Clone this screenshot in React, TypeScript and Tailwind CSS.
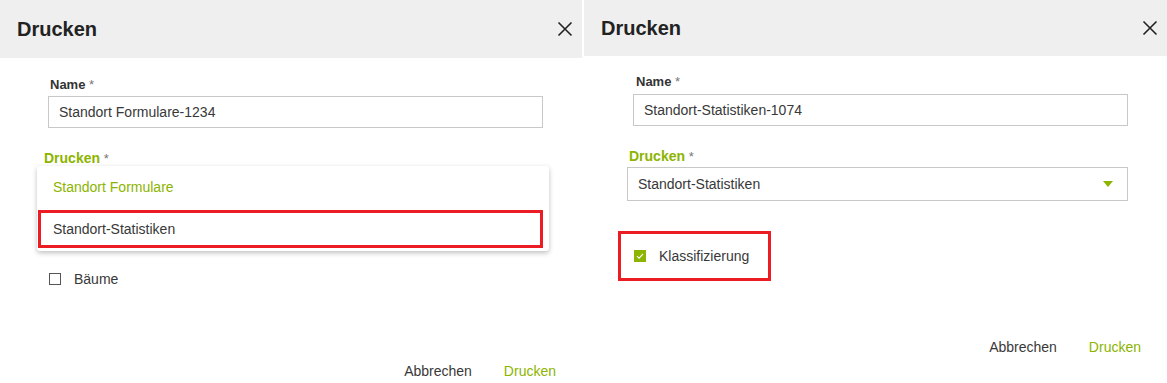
import React from 'react';

const green = 'text-[#8cb400]';

const CloseIcon: React.FC = () => (
  <svg width="16" height="16" viewBox="0 0 16 16" fill="none">
    <path d="M1.5 1.5L14.5 14.5M14.5 1.5L1.5 14.5" stroke="#222" strokeWidth="1.6" />
  </svg>
);

const Header: React.FC<{ h: string }> = ({ h }) => (
  <div className={`${h} bg-[#efefef] flex items-center justify-between pl-[17px] pr-[9px] shrink-0`}>
    <span className="text-[20px] font-bold text-[#222] leading-6">Drucken</span>
    <CloseIcon />
  </div>
);

const Label: React.FC<{ text: string; color?: string; size?: string; className?: string }> = ({
  text,
  color = 'text-[#333]',
  size = 'text-[13px]',
  className = '',
}) => (
  <div className={`h-[16px] leading-4 ${className}`}>
    <span className={`${size} font-bold ${color}`}>{text}</span>
    <span className="text-[13px] text-[#777]"> *</span>
  </div>
);

const TextInput: React.FC<{ value: string; className?: string }> = ({ value, className = '' }) => (
  <div
    className={`h-[32px] w-[495px] border border-[#c8c8c8] flex items-center pl-[10px] text-[14px] text-[#383838] ${className}`}
  >
    {value}
  </div>
);

const Footer: React.FC<{ pb: string }> = ({ pb }) => (
  <div className={`mt-auto flex justify-end gap-[32px] pr-[26px] ${pb} text-[14px] leading-4`}>
    <span className="text-[#383838]">Abbrechen</span>
    <span className={green}>Drucken</span>
  </div>
);

const App: React.FC = () => {
  return (
    <div
      className="w-[1167px] h-[383px] flex gap-[2px] bg-white overflow-hidden"
      style={{ fontFamily: '"Liberation Sans", Arial, sans-serif' }}
    >
      {/* left dialog: dropdown open */}
      <div className="w-[582px] h-full flex flex-col">
        <Header h="h-[58px]" />
        <div className="pl-[48px] flex flex-col">
          <Label text="Name" className="mt-[18px] ml-[2px]" />
          <TextInput value="Standort Formulare-1234" className="mt-[4px]" />
          <Label text="Drucken" color={green} size="text-[14px]" className="mt-[22px] ml-[-4px]" />
          <div className="relative h-[34px] w-[501px] ml-[-6px]">
            <div className="absolute top-0 left-[-5px] w-[512px] h-[85px] bg-white rounded-[3px] shadow-[0_2px_5px_rgba(0,0,0,0.25)] flex flex-col z-10">
              <div className={`h-[42px] flex items-center pl-[16px] text-[14px] ${green}`}>
                Standort Formulare
              </div>
              <div className="h-[43px] flex items-start pt-[2px]">
                <div className="ml-[1px] w-[505px] h-[38px] border-[3px] border-[#ec1c24] flex items-center pl-[12px] text-[14px] text-[#383838]">
                  Standort-Statistiken
                </div>
              </div>
            </div>
          </div>
          <div className="mt-[69px] ml-[1px] h-[20px] flex items-center gap-[13px]">
            <div className="w-[12px] h-[12px] border border-[#555]" />
            <span className="text-[14px] text-[#383838]">Bäume</span>
          </div>
        </div>
        <Footer pb="pb-[4px]" />
      </div>

      {/* right dialog: selection made */}
      <div className="flex-1 h-full flex flex-col">
        <Header h="h-[56px]" />
        <div className="pl-[49px] flex flex-col">
          <Label text="Name" className="mt-[17px] ml-[3px]" />
          <TextInput value="Standort-Statistiken-1074" className="mt-[5px]" />
          <Label text="Drucken" color={green} size="text-[14px]" className="mt-[22px] ml-[-4px]" />
          <div className="mt-[3px] ml-[-6px] h-[34px] w-[501px] border border-[#c8c8c8] flex items-center justify-between pl-[10px] pr-[14px] text-[14px] text-[#383838]">
            <span>Standort-Statistiken</span>
            <svg width="10" height="6" viewBox="0 0 10 6">
              <path d="M0 0H10L5 6Z" fill="#8cb400" />
            </svg>
          </div>
          <div className="mt-[30px] ml-[-15px] w-[153px] h-[50px] border-[3px] border-[#ec1c24] flex items-center pl-[13px] gap-[13px]">
            <div className="w-[12px] h-[12px] bg-[#8cb400] flex items-center justify-center">
              <svg width="8" height="8" viewBox="0 0 8 8" fill="none">
                <path d="M1 4.2L3.1 6.2L7 1.8" stroke="#fff" strokeWidth="1.1" />
              </svg>
            </div>
            <span className="text-[14px] text-[#383838]">Klassifizierung</span>
          </div>
        </div>
        <Footer pb="pb-[28px]" />
      </div>
    </div>
  );
};

export default App;
